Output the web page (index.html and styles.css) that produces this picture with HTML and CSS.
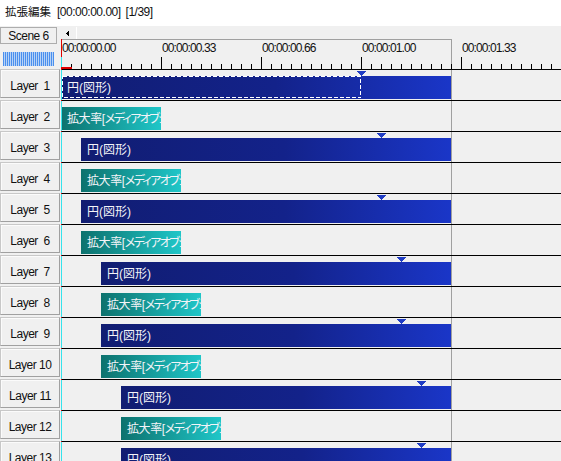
FILE: index.html
```html
<!DOCTYPE html>
<html lang="ja">
<head>
<meta charset="utf-8">
<title>拡張編集</title>
<link rel="stylesheet" href="styles.css">
</head>
<body>
<div class="title"><span class="jp">拡張編集</span><span class="tc">[00:00:00.00]</span><span class="tc">[1/39]</span></div>
<div class="header">
  <div class="head-left">
    <div class="scene">Scene 6</div>
    <div class="meter"></div>
  </div>
  <div class="head-right">
    <div class="scroll">
      <div class="scroll-btn"><svg width="3" height="5" viewBox="0 0 3 5" shape-rendering="crispEdges"><path d="M2 0H3V5H2V4H1V3H0V2H1V1H2Z" fill="#000"/></svg></div>
      <div class="scroll-track"></div>
    </div>
    <div class="ruler">
      <span>00:00:00.00</span><span>00:00:00.33</span><span>00:00:00.66</span><span>00:00:01.00</span><span>00:00:01.33</span>
    </div>
  </div>
</div>
<div class="rows">
  <div class="row"><div class="label">Layer  1</div><div class="track">
    <svg class="marker" style="left:296px" width="9" height="5" viewBox="0 0 9 5" shape-rendering="crispEdges"><path d="M0 0H9V1H8V2H7V3H6V4H5V5H4V4H3V3H2V2H1V1H0Z"/></svg>
    <div class="bar bar-obj" style="margin-left:0;width:390px">円(図形)<svg class="sel" width="299" height="22" viewBox="0 0 299 22" shape-rendering="crispEdges"><rect x="0.5" y="0.5" width="298" height="21" fill="none" stroke="#fff" stroke-dasharray="4 2"/></svg></div>
  </div></div>
  <div class="row"><div class="label">Layer  2</div><div class="track">
    <div class="bar bar-fx" style="margin-left:0;width:100px">拡大率[<span class="kana">メディアオブジェクト</span>]</div>
  </div></div>
  <div class="row"><div class="label">Layer  3</div><div class="track">
    <svg class="marker" style="left:316px" width="9" height="5" viewBox="0 0 9 5" shape-rendering="crispEdges"><path d="M0 0H9V1H8V2H7V3H6V4H5V5H4V4H3V3H2V2H1V1H0Z"/></svg>
    <div class="bar bar-obj" style="margin-left:20px;width:370px">円(図形)</div>
  </div></div>
  <div class="row"><div class="label">Layer  4</div><div class="track">
    <div class="bar bar-fx" style="margin-left:20px;width:100px">拡大率[<span class="kana">メディアオブジェクト</span>]</div>
  </div></div>
  <div class="row"><div class="label">Layer  5</div><div class="track">
    <svg class="marker" style="left:316px" width="9" height="5" viewBox="0 0 9 5" shape-rendering="crispEdges"><path d="M0 0H9V1H8V2H7V3H6V4H5V5H4V4H3V3H2V2H1V1H0Z"/></svg>
    <div class="bar bar-obj" style="margin-left:20px;width:370px">円(図形)</div>
  </div></div>
  <div class="row"><div class="label">Layer  6</div><div class="track">
    <div class="bar bar-fx" style="margin-left:20px;width:100px">拡大率[<span class="kana">メディアオブジェクト</span>]</div>
  </div></div>
  <div class="row"><div class="label">Layer  7</div><div class="track">
    <svg class="marker" style="left:336px" width="9" height="5" viewBox="0 0 9 5" shape-rendering="crispEdges"><path d="M0 0H9V1H8V2H7V3H6V4H5V5H4V4H3V3H2V2H1V1H0Z"/></svg>
    <div class="bar bar-obj" style="margin-left:40px;width:350px">円(図形)</div>
  </div></div>
  <div class="row"><div class="label">Layer  8</div><div class="track">
    <div class="bar bar-fx" style="margin-left:40px;width:100px">拡大率[<span class="kana">メディアオブジェクト</span>]</div>
  </div></div>
  <div class="row"><div class="label">Layer  9</div><div class="track">
    <svg class="marker" style="left:336px" width="9" height="5" viewBox="0 0 9 5" shape-rendering="crispEdges"><path d="M0 0H9V1H8V2H7V3H6V4H5V5H4V4H3V3H2V2H1V1H0Z"/></svg>
    <div class="bar bar-obj" style="margin-left:40px;width:350px">円(図形)</div>
  </div></div>
  <div class="row"><div class="label">Layer 10</div><div class="track">
    <div class="bar bar-fx" style="margin-left:40px;width:100px">拡大率[<span class="kana">メディアオブジェクト</span>]</div>
  </div></div>
  <div class="row"><div class="label">Layer 11</div><div class="track">
    <svg class="marker" style="left:356px" width="9" height="5" viewBox="0 0 9 5" shape-rendering="crispEdges"><path d="M0 0H9V1H8V2H7V3H6V4H5V5H4V4H3V3H2V2H1V1H0Z"/></svg>
    <div class="bar bar-obj" style="margin-left:60px;width:330px">円(図形)</div>
  </div></div>
  <div class="row"><div class="label">Layer 12</div><div class="track">
    <div class="bar bar-fx" style="margin-left:60px;width:100px">拡大率[<span class="kana">メディアオブジェクト</span>]</div>
  </div></div>
  <div class="row"><div class="label">Layer 13</div><div class="track">
    <svg class="marker" style="left:356px" width="9" height="5" viewBox="0 0 9 5" shape-rendering="crispEdges"><path d="M0 0H9V1H8V2H7V3H6V4H5V5H4V4H3V3H2V2H1V1H0Z"/></svg>
    <div class="bar bar-obj" style="margin-left:60px;width:330px">円(図形)</div>
  </div></div>
</div>
</body>
</html>
```

FILE: styles.css
```css
* { box-sizing: border-box; margin: 0; padding: 0; }
html, body { width: 561px; height: 461px; overflow: hidden; }
body {
  background: #f0f0f0;
  font-family: "Liberation Sans", "Noto Sans CJK JP", sans-serif;
  font-size: 12px;
  color: #000;
}
.title {
  height: 26px;
  background: #fff;
  padding: 5px 0 0 5px;
  display: flex;
  gap: 5px;
  font-size: 12px;
  line-height: 14px;
  white-space: nowrap;
  color: #111;
}
.title .jp { width: 47px; font-size: 11.5px; }
.title .tc { letter-spacing: -0.5px; }

.header { display: grid; grid-template-columns: 61px 1fr; height: 43px; }
.head-left { padding-top: 1px; }
.scene {
  width: 57px; height: 17px;
  border: 1px solid #adadad;
  background: #f0f0f0;
  text-align: center;
  padding-top: 2px;
  line-height: 13px;
  letter-spacing: -0.5px;
  color: #111;
}
.meter {
  margin: 8px 0 0 3px;
  width: 51px; height: 14px;
  background: repeating-linear-gradient(90deg, #4a8fee 0 1px, #b6d2f6 1px 2px);
}
.head-right { display: flex; flex-direction: column; overflow: hidden; }
.scroll { height: 13px; display: flex; padding-top: 1px; }
.scroll-btn { width: 16px; padding: 4px 0 0 5px; border-right: 1px solid #fff; }
.scroll-btn svg { display: block; }
.scroll-track { flex: 1; }

.ruler {
  height: 30px;
  display: flex;
  padding-top: 3px;
  line-height: 13px;
  letter-spacing: -0.9px;
  white-space: nowrap;
  color: #111;
  background:
    linear-gradient(#e00000, #e00000) 0 28px / 11px 2px no-repeat,
    linear-gradient(#e00000 0 18px, #35e3ec 18px 28px, #e00000 28px) 0 0 / 1px 100% no-repeat,
    repeating-linear-gradient(90deg, #000 0 1px, transparent 1px 100px) 0 18px / 100% 12px no-repeat,
    repeating-linear-gradient(90deg, #000 0 1px, transparent 1px 10px) 0 25px / 100% 5px no-repeat,
    linear-gradient(#a0a0a0, #a0a0a0) 390px 0 / 1px 100% no-repeat,
    linear-gradient(#a0a0a0, #a0a0a0) 0 0 / 391px 1px no-repeat;
}
.ruler span { flex: none; width: 100px; padding-left: 1px; }

.rows { display: flex; flex-direction: column; }
.row { display: grid; grid-template-columns: 61px 1fr; height: 31px; }
.label {
  width: 60px; height: 29px;
  border: 1px solid;
  border-color: #c8c8c8 #a0a0a0 #a0a0a0 #c8c8c8;
  box-shadow: inset 1px 1px #fbfbfb;
  text-align: center;
  white-space: pre;
  padding-top: 6px;
  line-height: 21px;
  letter-spacing: -0.5px;
  color: #111;
}
.track {
  position: relative;
  height: 31px;
  border-top: 1px solid #000;
  padding-top: 6px;
  background: linear-gradient(#a0a0a0, #a0a0a0) 390px 0 / 1px 100% no-repeat;
}
.track::before {
  content: "";
  position: absolute;
  left: 0; top: -1px; bottom: 0;
  width: 1px;
  background: linear-gradient(#e00000 0 1px, #35e3ec 1px);
  z-index: 2;
}
.bar {
  position: relative;
  height: 23px;
  color: #f4f4f8;
  font-size: 12px;
  line-height: 22px;
  padding: 1px 0 0 6px;
  white-space: nowrap;
  overflow: hidden;
}
.bar-obj { background: linear-gradient(90deg, #111d72, #13228a 55%, #1a36c8); }
.bar-fx {
  background: linear-gradient(90deg, #0d726e, #1fc6c8);
  font-feature-settings: "palt";
  letter-spacing: -0.4px;
}
.bar-fx .kana { letter-spacing: -1.6px; }
.marker { position: absolute; top: 1px; fill: #1f3cc4; z-index: 1; }
.sel { position: absolute; left: 1px; top: 0; }
```
